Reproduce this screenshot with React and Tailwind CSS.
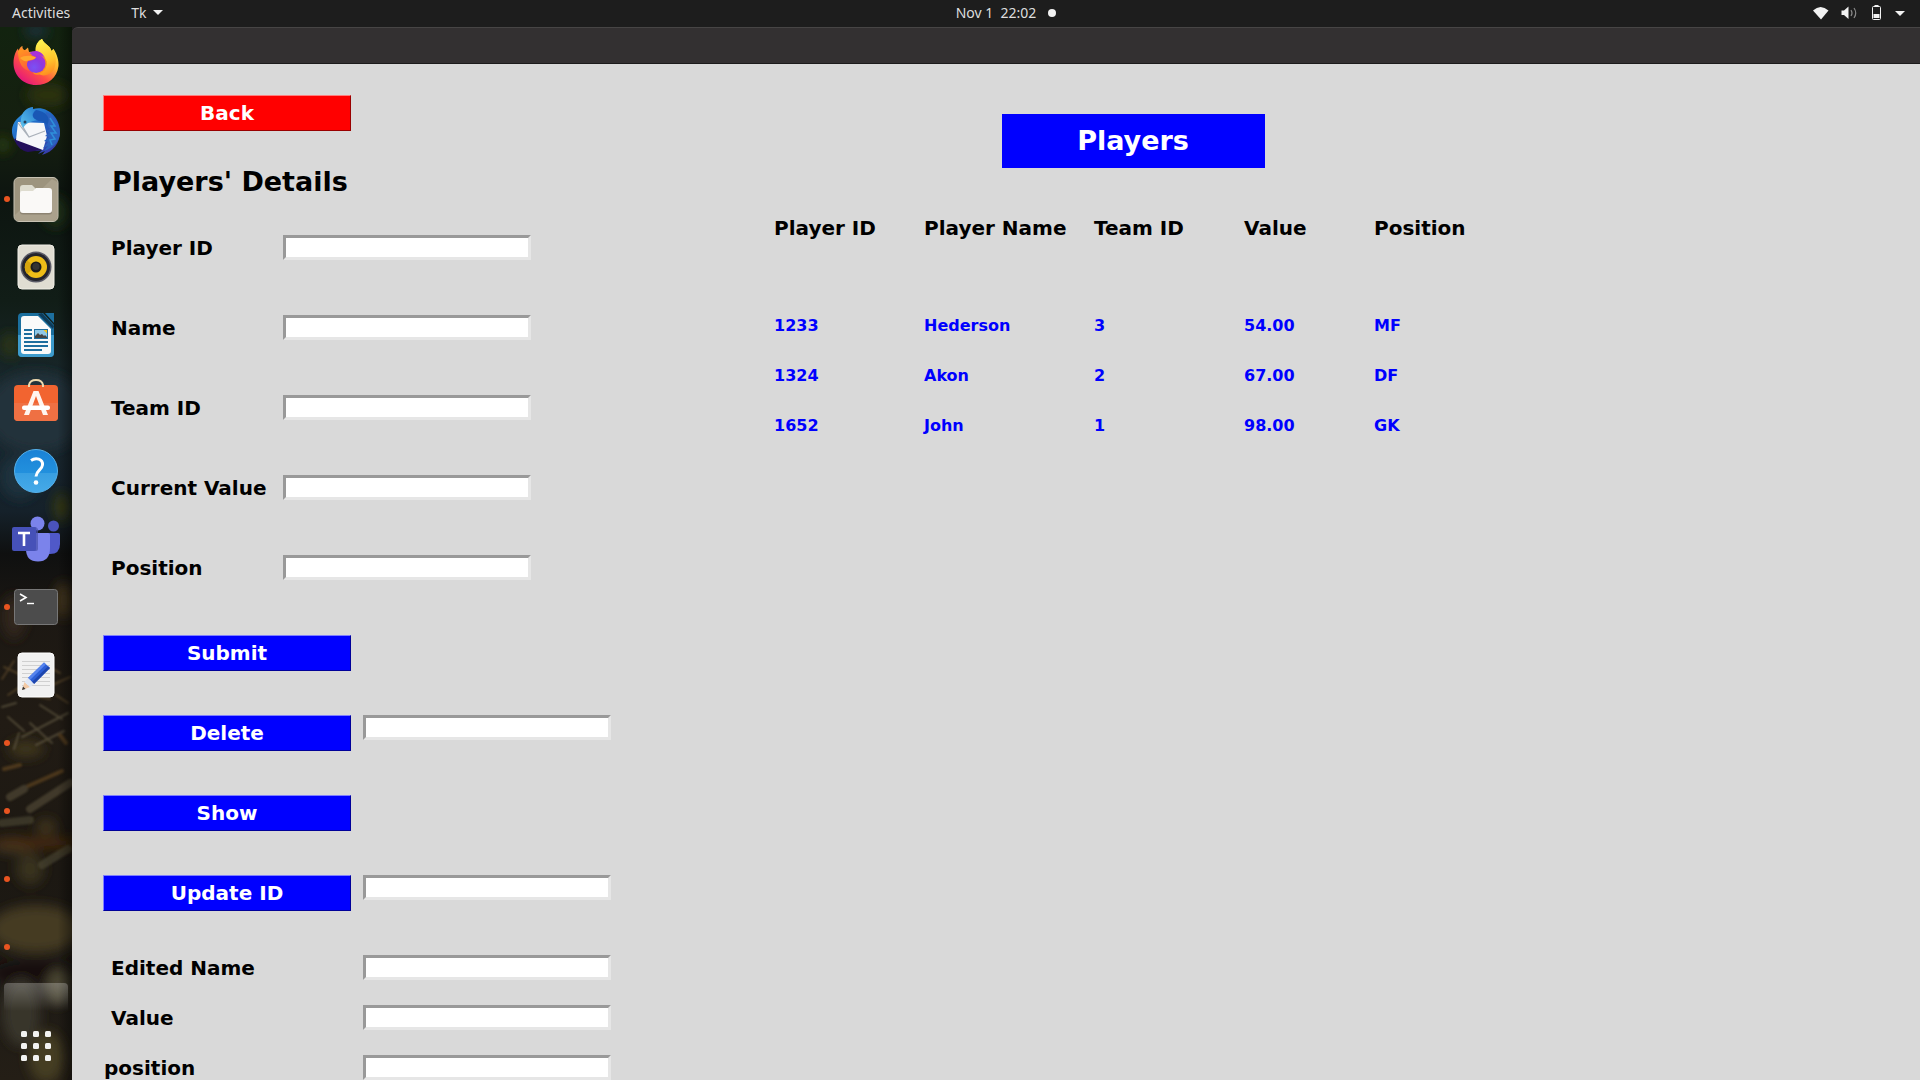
import React from "react";

const running = <circle cx="7" cy="35" r="3" fill="#e95420" />;

function DockItem({ label, active, children }) {
  return (
    <button type="button" aria-label={label} className="block h-[68px] w-full shrink-0">
      <svg viewBox="0 0 72 68" className="block h-[68px] w-[72px]" aria-hidden="true">
        {active && running}
        {children}
      </svg>
    </button>
  );
}

function Firefox() {
  return (
    <g>
      <defs>
        <linearGradient id="fxBody" x1="0.85" y1="0.1" x2="0.2" y2="0.95">
          <stop offset="0" stopColor="#fff44f" />
          <stop offset="0.35" stopColor="#ffb02e" />
          <stop offset="0.65" stopColor="#ff4f45" />
          <stop offset="1" stopColor="#e3147f" />
        </linearGradient>
        <linearGradient id="fxTail" x1="0.4" y1="0" x2="0.6" y2="1">
          <stop offset="0" stopColor="#fff24f" />
          <stop offset="0.6" stopColor="#ffc52c" />
          <stop offset="1" stopColor="#ff8a20" />
        </linearGradient>
        <radialGradient id="fxGlobe" cx="0.4" cy="0.7" r="0.7">
          <stop offset="0" stopColor="#7a52f5" />
          <stop offset="0.6" stopColor="#8b3ae0" />
          <stop offset="1" stopColor="#a832d8" />
        </radialGradient>
        <linearGradient id="fxHead" x1="0" y1="0" x2="0.6" y2="1">
          <stop offset="0" stopColor="#ff9a1e" />
          <stop offset="1" stopColor="#ff5a3c" />
        </linearGradient>
      </defs>
      <path d="M42 11 C36 14 34.500 20 36 25 L48 45 Z" fill="url(#fxTail)" />
      <path d="M42 11 C44 16 50 17 51.500 23 L53.500 21 C57 26 59 33 58.500 38 C57 50 48 57 36 57 C23 57 13.500 47 13.500 35 C13.500 28 16 23 18 20.500 L18.500 23 C19.500 20 21 18.500 22.500 18 C22 20 23.500 22 24.500 22.500 L28 19.500 L29 24 C35 23 42 25 44.500 31 C47 37 43 45 36 45 L45 43 C50 37 48 29 41 26 C35 23 36 15 42 11 Z" fill="url(#fxBody)" />
      <path d="M36 24 C45 24 49 33 46 40 C44 46 38 48 34 46 L30 40 Z" fill="#ff8a20" />
      <path d="M42 11 C44 16 50 17 51.500 23 L53.500 21 C56 27 57 34 54 41 C51 47 43 49 39 46 C48 43 49 31 42 27 C34 22 36 14 42 11 Z" fill="url(#fxTail)" />
      <circle cx="36" cy="35.500" r="9.500" fill="url(#fxGlobe)" />
      <path d="M29 25 C35 21 42 23 45 30 C42 27 39 27 35 29 Z" fill="#a832d8" />
      <path d="M18 23 C22 19 26 23 30 25 C31 28 34 28 36 29 C35 32 31 32.500 28 33 C26 36 27 40 30 43 C23 42 18 35 18 23 Z" fill="url(#fxHead)" />
      <path d="M20 30 C24 27 31 27 36 29.500 C34 32 30 31.500 27 33 C25 34 22 32 20 30 Z" fill="#ffa82e" />
    </g>
  );
}

function Thunderbird() {
  return (
    <g>
      <defs>
        <linearGradient id="tbBody" x1="0.1" y1="0" x2="0.8" y2="1">
          <stop offset="0" stopColor="#2f9be4" />
          <stop offset="0.5" stopColor="#1f5fc0" />
          <stop offset="1" stopColor="#3a3aa8" />
        </linearGradient>
        <linearGradient id="tbHead" x1="0" y1="1" x2="1" y2="0">
          <stop offset="0" stopColor="#5cc3ee" />
          <stop offset="1" stopColor="#2277cc" />
        </linearGradient>
      </defs>
      <path d="M29 12 L33 11 L33 13 C47 9 60 21 60 36 C60 47 53 56 42 59 L45 55 L38 58 L42 54 L36 55 C27 55 17 50 14 43 C10 35 12 27 19 21 Z" fill="url(#tbBody)" />
      <path d="M14 43 C17 51 22 55 28 56 L42 54 L18 42 Z" fill="#24105c" />
      <path d="M18 26 L44 27 L47 40 L43 54 L16 44 Z" fill="#f6f7f9" />
      <path d="M18 27 L29 41 L45 35 M20 26 L29 41" stroke="#aab1ba" strokeWidth="1.200" fill="none" />
      <path d="M44 24 C49 26 47 31 50 33 L46 35 L49 37 L45 40 L49 41 L44 45 L48 46 L43 52 L48 50 L44 55 C56 51 60 43 60 36 C59 26 53 19 46 16 Z" fill="#2b62bf" />
      <path d="M50 22 L55 30 L51 30 L56 37 L51 37 L55 43 L50 44 L52 49" stroke="#2f8fd9" strokeWidth="1.500" fill="none" />
      <path d="M33 11 C24 12 20 19 21 28 L23 32 C26 27 31 25 38 24 C31 22 31 17 36 14 L33 14 Z" fill="url(#tbHead)" />
      <path d="M36 14 C31 18 32 23 39 25 C43 25 45 27 47 29 C52 22 45 15 36 14 Z" fill="#1957b5" />
      <circle cx="25" cy="26" r="1.500" fill="#26415c" />
    </g>
  );
}

function Files() {
  return (
    <g>
      <rect x="14" y="13.500" width="44" height="44" rx="5" fill="#9d947e" stroke="#c8c2b3" strokeWidth="1" />
      <path d="M15 51 L52 15 L57 18 V53 Q57 57 53 57 H19 Q15 57 15 53 Z" fill="#aaa18c" />
      <path d="M20 34 V24 Q20 21 23 21 H32 L36 25 H50 V34 Z" fill="#dedccf" />
      <path d="M20 30 Q20 28 22 28 H33 L36 25 H49 Q52 25 52 28 V48 Q52 50.500 49 50.500 H23 Q20 50.500 20 48 Z" fill="#6f6858" opacity="0.5" />
      <path d="M20 29 Q20 27 22 27 H33 L36 24 H49 Q52 24 52 27 V46 Q52 49 49 49 H23 Q20 49 20 46 Z" fill="#faf9f7" />
    </g>
  );
}

function Rhythmbox() {
  return (
    <g>
      <rect x="18" y="13" width="36" height="44" rx="4" fill="#e0ddd2" stroke="#f0eee6" strokeWidth="1" />
      <circle cx="36" cy="35" r="15.500" fill="#5a5a66" />
      <circle cx="36" cy="35" r="14" fill="#24242c" />
      <circle cx="36" cy="35" r="11" fill="#eebd18" />
      <path d="M36 35 L27 28.500 A11 11 0 0 0 27 42 Z" fill="#d6a40e" />
      <circle cx="36" cy="35" r="5.500" fill="#1c1c1c" />
      <circle cx="36" cy="34.500" r="3.500" fill="#333333" />
    </g>
  );
}

function Writer() {
  return (
    <g>
      <path d="M22 13 H43 L54 25 V53 Q54 57 50 57 H22 Q18 57 18 53 V17 Q18 13 22 13 Z" fill="#1b6f9e" />
      <path d="M18 35 H54 V53 Q54 57 50 57 H22 Q18 57 18 53 Z" fill="#3d9bcc" />
      <path d="M45 13 H54 V23 Z" fill="#1d6f9f" />
      <path d="M42 13 L54 26 L53 29 L38 14 Z" fill="#0e3b58" />
      <path d="M24 16 H38 L51 29 V51 Q51 54 48 54 H24 Q21 54 21 51 V19 Q21 16 24 16 Z" fill="#fafafa" />
      <path d="M24 30 H32 M24 34 H32 M24 38 H32 M24 42 H48 M24 46 H48 M24 50 H42" stroke="#1f6e9e" strokeWidth="2" />
      <rect x="34" y="29" width="14" height="10" fill="#1f6e9e" />
      <rect x="35" y="30" width="12" height="8" fill="#8fc8e8" />
      <path d="M43.500 30 H47 V33.500 Z" fill="#f1c21b" />
      <path d="M35 38 V36 L38 33 L40 35 L42 34 L44 36 L45 35 L47 37 V38 Z" fill="#444444" />
    </g>
  );
}

function Software() {
  return (
    <g>
      <rect x="14" y="17" width="44" height="36" rx="4" fill="#f26430" />
      <path d="M14 35 H58 V49 Q58 53 54 53 H18 Q14 53 14 49 Z" fill="#ef7043" />
      <path d="M29 19 V17 Q30 12 36 12 Q42 12 43 17 V19" stroke="#eed9ae" strokeWidth="2" fill="none" />
      <path d="M33.500 23 H38.500 L48 47 H43 L36 28 L29 47 H24 Z" fill="#fff5ef" />
      <rect x="22" y="37.500" width="28" height="4.500" rx="2" fill="#ffffff" />
    </g>
  );
}

function Help() {
  return (
    <g>
      <defs>
        <linearGradient id="helpBg" x1="0" y1="0" x2="0" y2="1">
          <stop offset="0" stopColor="#1a82d6" />
          <stop offset="0.54" stopColor="#2290dd" />
          <stop offset="0.55" stopColor="#389fe2" />
          <stop offset="1" stopColor="#46aae8" />
        </linearGradient>
      </defs>
      <circle cx="36" cy="35" r="21.500" fill="url(#helpBg)" stroke="#55b0ea" strokeWidth="1" />
      <path d="M31 24.500 C36 21 43 23 42.500 29 C42 34 36.500 34 36 40.500" stroke="#ffffff" strokeWidth="3" fill="none" />
      <circle cx="36" cy="46.500" r="2.300" fill="#ffffff" />
    </g>
  );
}

function Teams() {
  return (
    <g>
      <circle cx="53.500" cy="22" r="5.500" fill="#4b53bc" />
      <path d="M46 29 H58 Q60 29 60 31 V40 Q60 50 50 50 H46 Z" fill="#5059c9" />
      <circle cx="37.500" cy="19.500" r="7" fill="#7b83eb" />
      <path d="M27 29 H48 Q50 29 50 31 V44 Q50 57.500 38 57.500 Q26 57.500 26 45 Z" fill="#7b83eb" />
      <path d="M26 47 H36 Q38 47 38 45 V25 L36 23 H31 Z" fill="#4a52ad" opacity="0.7" />
      <rect x="12" y="23" width="24" height="24" rx="2" fill="#4651b8" />
      <path d="M18 29 H30 M24 29 V42" stroke="#ffffff" strokeWidth="2.600" />
    </g>
  );
}

function Terminal() {
  return (
    <g>
      <rect x="14.500" y="17.500" width="43" height="35" rx="3" fill="#4c4c4c" stroke="#777777" />
      <path d="M20 22 L26 25.500 L20 29" stroke="#ffffff" strokeWidth="1.600" fill="none" />
      <path d="M27 31.500 H34" stroke="#ffffff" strokeWidth="1.400" />
    </g>
  );
}

function Editor() {
  return (
    <g>
      <rect x="18" y="13" width="36" height="44" rx="4" fill="#f1f1f1" stroke="#ffffff" />
      <path d="M22 21.500 H50 M22 25.500 H50 M22 29.500 H50 M22 33.500 H50 M22 37.500 H50 M22 41.500 H50 M22 45.500 H50" stroke="#d0d0d0" strokeWidth="1" />
      <path d="M22 50 L24.500 42 L30 47 Z" fill="#f2c9a5" />
      <path d="M22 50 L23 46.500 L25.500 49 Z" fill="#333333" />
      <path d="M28 38 L44 22.500 L50 28 L34 44 Z" fill="#2c5fd6" />
      <path d="M28 38 L44 22.500 L46 24.300 L30 40 Z" fill="#5684ee" />
      <path d="M32 42 L48 26.300 L50 28 L34 44 Z" fill="#1e46ad" />
      <path d="M28 38 L34 44 L30 47 L24.500 42 Z" fill="#dfe7f5" />
    </g>
  );
}

function Wallpaper() {
  return (
    <svg viewBox="0 0 72 1053" preserveAspectRatio="none" className="absolute inset-0 h-full w-full" aria-hidden="true">
      <defs>
        <linearGradient id="wall" x1="0" y1="0" x2="0" y2="1">
          <stop offset="0" stopColor="#12230f" />
          <stop offset="0.1" stopColor="#151f10" />
          <stop offset="0.16" stopColor="#0d1510" />
          <stop offset="0.26" stopColor="#111d17" />
          <stop offset="0.36" stopColor="#1b2a31" />
          <stop offset="0.46" stopColor="#15212a" />
          <stop offset="0.5" stopColor="#0f1010" />
          <stop offset="0.56" stopColor="#1c1813" />
          <stop offset="0.66" stopColor="#211b14" />
          <stop offset="0.8" stopColor="#1c1812" />
          <stop offset="0.9" stopColor="#1d1a15" />
          <stop offset="1" stopColor="#241e16" />
        </linearGradient>
        <linearGradient id="edge" x1="0" y1="0" x2="1" y2="0">
          <stop offset="0.8" stopColor="#000000" stopOpacity="0" />
          <stop offset="1" stopColor="#000000" stopOpacity="0.4" />
        </linearGradient>
        <filter id="soft" x="-50%" y="-50%" width="200%" height="200%">
          <feGaussianBlur stdDeviation="6" />
        </filter>
        <filter id="faint">
          <feGaussianBlur stdDeviation="1" />
        </filter>
      </defs>
      <rect width="72" height="1053" fill="url(#wall)" />
      <g filter="url(#soft)">
        <ellipse cx="36" cy="4" rx="12" ry="6" fill="#1d3040" />
        <ellipse cx="48" cy="68" rx="22" ry="12" fill="#2a300f" />
        <ellipse cx="3" cy="118" rx="7" ry="8" fill="#294010" />
        <ellipse cx="56" cy="185" rx="14" ry="16" fill="#1d2f16" />
        <ellipse cx="10" cy="318" rx="10" ry="12" fill="#2c3516" />
        <ellipse cx="36" cy="385" rx="50" ry="40" fill="#22323b" />
        <ellipse cx="62" cy="480" rx="8" ry="14" fill="#36390f" />
        <ellipse cx="20" cy="450" rx="20" ry="22" fill="#1c303d" />
        <ellipse cx="64" cy="573" rx="9" ry="18" fill="#42351f" />
        <ellipse cx="14" cy="590" rx="12" ry="22" fill="#33281c" />
        <ellipse cx="26" cy="722" rx="18" ry="9" fill="#3d341f" />
        <ellipse cx="14" cy="818" rx="22" ry="8" fill="#423a27" />
        <ellipse cx="46" cy="800" rx="10" ry="8" fill="#40361f" />
        <ellipse cx="36" cy="816" rx="48" ry="5" fill="#4b2c09" />
        <ellipse cx="30" cy="842" rx="14" ry="16" fill="#37301f" />
        <ellipse cx="36" cy="902" rx="46" ry="24" fill="#443a24" />
        <ellipse cx="34" cy="946" rx="44" ry="13" fill="#12110f" />
        <ellipse cx="21" cy="985" rx="19" ry="34" fill="#39352a" />
        <ellipse cx="58" cy="960" rx="12" ry="18" fill="#4a4533" />
        <ellipse cx="46" cy="1030" rx="18" ry="26" fill="#453d22" />
      </g>
      <g filter="url(#faint)" fill="none" strokeLinecap="round" opacity="0.6">
        <path d="M4 640 L30 652 M34 632 L60 646 M8 668 L26 656 M48 660 L70 650 M2 652 L14 634 M20 666 L50 672 M56 668 L68 676" stroke="#66502e" strokeWidth="2" />
        <path d="M8 690 L24 704 M22 710 L68 686 M30 696 L52 716 M40 678 L62 692 M14 722 L19 706 M36 718 L64 704 M2 680 L16 676" stroke="#6b6248" strokeWidth="2" />
        <path d="M26 760 L62 744 M60 708 L66 716 M4 742 L20 738" stroke="#6a4c22" strokeWidth="4" />
        <path d="M30 782 L70 756 M10 770 L24 762" stroke="#58503a" strokeWidth="8" />
        <path d="M2 796 L30 793 M42 838 L68 822" stroke="#4d4936" strokeWidth="8" />
      </g>
      <rect width="72" height="1053" fill="url(#edge)" />
    </svg>
  );
}

function Dock() {
  return (
    <nav aria-label="Dock" className="relative w-[72px] shrink-0 overflow-hidden bg-[#15140f]">
      <Wallpaper />
      <div className="relative flex h-full flex-col pt-px">
        <DockItem label="Firefox"><Firefox /></DockItem>
        <DockItem label="Thunderbird"><Thunderbird /></DockItem>
        <DockItem label="Files" active><Files /></DockItem>
        <DockItem label="Rhythmbox"><Rhythmbox /></DockItem>
        <DockItem label="Writer"><Writer /></DockItem>
        <DockItem label="Software"><Software /></DockItem>
        <DockItem label="Help"><Help /></DockItem>
        <DockItem label="Teams"><Teams /></DockItem>
        <DockItem label="Terminal" active><Terminal /></DockItem>
        <DockItem label="Text Editor"><Editor /></DockItem>
        <DockItem label="Window 1" active />
        <DockItem label="Window 2" active />
        <DockItem label="Window 3" active />
        <DockItem label="Window 4" active />
        <div className="mx-1 mt-[3px] h-7 shrink-0 rounded-t bg-linear-to-b from-white/25 to-white/0" />
        <button type="button" aria-label="Show applications" className="mt-auto mb-[18px] self-center">
          <svg width="32" height="32" viewBox="0 0 32 32" fill="#f2f2f0" aria-hidden="true">
            {[1, 13, 25].map((y) =>
              [1, 13, 25].map((x) => <rect key={`${x}-${y}`} x={x} y={y} width="6" height="6" rx="1.500" />)
            )}
          </svg>
        </button>
      </div>
    </nav>
  );
}

function TopBar() {
  return (
    <header className="grid h-[27px] shrink-0 grid-cols-[1fr_auto_1fr] items-center bg-[#1d1d1d] px-3 pb-0.5 font-['Noto_Sans','Open_Sans',sans-serif] text-sm text-[#dedede]">
      <div className="flex items-center gap-[61px]">
        <button type="button">Activities</button>
        <button type="button" className="flex items-center gap-1.5">
          Tk
          <svg width="10" height="5" viewBox="0 0 10 5" fill="#f2f2f2" aria-hidden="true"><path d="M0 0H10L5 5Z" /></svg>
        </button>
      </div>
      <button type="button" className="flex items-center gap-3 pl-[92px]">
        <span className="whitespace-pre">Nov 1  22:02</span>
        <span className="size-2 rounded-full bg-[#f2f2f2]" />
      </button>
      <button type="button" aria-label="System menu" className="flex items-center justify-self-end pr-[3px]">
        <svg width="92" height="18" viewBox="0 0 92 18" fill="#f2f2f2" aria-hidden="true">
          <path d="M0 6.500 Q7.500 -0.500 15.500 6.500 L8 15.500 Z" />
          <path d="M28.500 6.500 H31 L35.500 2.500 V15 L31 11 H28.500 Z" />
          <path d="M38 6 Q40 9 38 12 M41 4 Q44.500 9 41 14" stroke="#8a8a8a" strokeWidth="1.200" fill="none" />
          <rect x="59.500" y="2.500" width="8" height="13" rx="1" fill="none" stroke="#f2f2f2" />
          <rect x="61.500" y="1" width="4" height="1.500" />
          <rect x="60.500" y="10" width="6" height="4" />
          <path d="M82 7 H92 L87 12 Z" />
        </svg>
      </button>
    </header>
  );
}

const entryClass =
  "block h-[25px] w-[248px] shrink-0 rounded-none border-[3px] border-t-[#999] border-l-[#999] border-r-[#e6e6e6] border-b-[#e6e6e6] bg-white px-px text-sm leading-4 text-black outline-none";
const blueButton =
  "h-9 w-[248px] shrink-0 border border-t-[#7f7fff] border-l-[#7f7fff] border-r-[#000099] border-b-[#000099] bg-[#0000ff] leading-6 text-white";

function Field({ id, label }) {
  return (
    <div className="flex h-20">
      <label htmlFor={id} className="w-[180px] shrink-0 pl-2 leading-[27px]">{label}</label>
      <input id={id} type="text" className={entryClass} />
    </div>
  );
}

function Action({ label, entry }) {
  return (
    <div className="flex h-20 items-start gap-3">
      <button type="button" className={blueButton}>{label}</button>
      {entry && <input type="text" aria-label={entry} className={entryClass} />}
    </div>
  );
}

function EditField({ id, label, indent = true }) {
  return (
    <div className="flex h-[50px]">
      <label htmlFor={id} className={indent ? "w-[260px] shrink-0 pl-2 leading-[27px]" : "w-[260px] shrink-0 pl-px leading-[27px]"}>{label}</label>
      <input id={id} type="text" className={entryClass} />
    </div>
  );
}

function PlayerForm() {
  return (
    <form className="w-[508px] shrink-0 pt-[31px]" onSubmit={(e) => e.preventDefault()}>
      <button
        type="button"
        className="block h-9 w-[248px] border border-t-[#ff7f7f] border-l-[#ff7f7f] border-r-[#990000] border-b-[#990000] bg-[#ff0000] leading-6 text-white"
      >
        Back
      </button>
      <h1 className="mt-[35px] mb-[37px] pl-[9px] text-[27px] leading-8">Players' Details</h1>
      <Field id="player-id" label="Player ID" />
      <Field id="name" label="Name" />
      <Field id="team-id" label="Team ID" />
      <Field id="current-value" label="Current Value" />
      <Field id="position" label="Position" />
      <Action label="Submit" />
      <Action label="Delete" entry="Delete ID" />
      <Action label="Show" />
      <Action label="Update ID" entry="Update ID" />
      <EditField id="edited-name" label="Edited Name" />
      <EditField id="edited-value" label="Value" />
      <EditField id="edited-position" label="position" indent={false} />
    </form>
  );
}

const players = [
  ["1233", "Hederson", "3", "54.00", "MF"],
  ["1324", "Akon", "2", "67.00", "DF"],
  ["1652", "John", "1", "98.00", "GK"],
];

function PlayerTable() {
  return (
    <section className="w-[718px] shrink-0 pt-[50px]">
      <h2 className="mx-auto h-[54px] w-[263px] bg-[#0000ff] text-center text-[27px] leading-[54px] text-white">Players</h2>
      <table className="mt-[35px] w-full table-fixed text-left">
        <colgroup>
          <col className="w-[150px]" />
          <col className="w-[170px]" />
          <col className="w-[150px]" />
          <col className="w-[130px]" />
          <col />
        </colgroup>
        <thead>
          <tr className="h-[98px] align-top">
            {["Player ID", "Player Name", "Team ID", "Value", "Position"].map((h) => (
              <th key={h} scope="col" className="p-0 leading-[50px] whitespace-nowrap">{h}</th>
            ))}
          </tr>
        </thead>
        <tbody className="text-base leading-[50px] text-[#0000ff]">
          {players.map((row) => (
            <tr key={row[0]}>
              {row.map((cell, i) => <td key={i} className="p-0">{cell}</td>)}
            </tr>
          ))}
        </tbody>
      </table>
    </section>
  );
}

export default function App() {
  return (
    <div className="flex h-screen flex-col overflow-hidden bg-[#1d1d1d]">
      <TopBar />
      <div className="flex min-h-0 flex-1">
        <Dock />
        <div className="flex min-w-0 flex-1 flex-col bg-[#1d1d1d]">
          <div className="h-[37px] shrink-0 rounded-tl-md border-t border-b border-t-[#474545] border-b-[#1c1b1b] bg-[#333031]" />
          <main className="flex min-h-0 flex-1 items-start gap-[163px] overflow-hidden bg-[#d9d9d9] pl-[31px] font-['DejaVu_Sans',sans-serif] text-xl font-bold text-black">
            <PlayerForm />
            <PlayerTable />
          </main>
        </div>
      </div>
    </div>
  );
}
